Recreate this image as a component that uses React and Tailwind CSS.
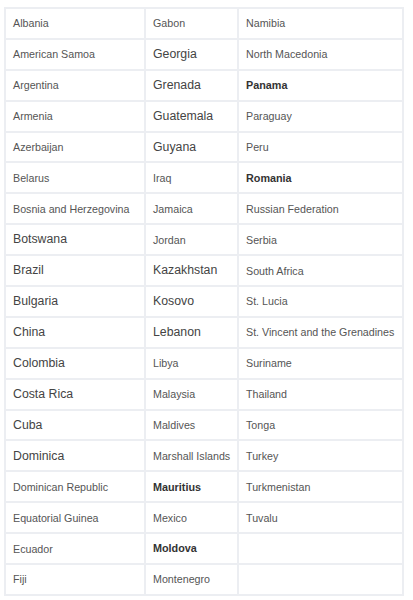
const rows = [
  [['Albania'], ['Gabon'], ['Namibia']],
  [['American Samoa'], ['Georgia', 'lg'], ['North Macedonia']],
  [['Argentina'], ['Grenada', 'lg'], ['Panama', 'b']],
  [['Armenia'], ['Guatemala', 'lg'], ['Paraguay']],
  [['Azerbaijan'], ['Guyana', 'lg'], ['Peru']],
  [['Belarus'], ['Iraq'], ['Romania', 'b']],
  [['Bosnia and Herzegovina'], ['Jamaica'], ['Russian Federation']],
  [['Botswana', 'lg'], ['Jordan'], ['Serbia']],
  [['Brazil', 'lg'], ['Kazakhstan', 'lg'], ['South Africa']],
  [['Bulgaria', 'lg'], ['Kosovo', 'lg'], ['St. Lucia']],
  [['China', 'lg'], ['Lebanon', 'lg'], ['St. Vincent and the Grenadines']],
  [['Colombia', 'lg'], ['Libya'], ['Suriname']],
  [['Costa Rica', 'lg'], ['Malaysia'], ['Thailand']],
  [['Cuba', 'lg'], ['Maldives'], ['Tonga']],
  [['Dominica', 'lg'], ['Marshall Islands'], ['Turkey']],
  [['Dominican Republic'], ['Mauritius', 'b'], ['Turkmenistan']],
  [['Equatorial Guinea'], ['Mexico'], ['Tuvalu']],
  [['Ecuador'], ['Moldova', 'b'], ['']],
  [['Fiji'], ['Montenegro'], ['']],
];

const cellStyle = {
  lg: 'text-[12.3px] text-[#444]',
  b: 'text-[10.8px] font-bold text-[#333]',
};

export default function App() {
  return (
    <div className="bg-white min-h-[600px] pt-[7px] pl-[4px] font-['Liberation_Sans',Arial,sans-serif]">
      <table className="border-collapse table-fixed w-[398px]">
        <colgroup>
          <col className="w-[140px]" />
          <col className="w-[93px]" />
          <col className="w-[165px]" />
        </colgroup>
        <tbody>
          {rows.map((row, i) => (
            <tr key={i} className="h-[30.9px]">
              {row.map(([name, kind], j) => (
                <td
                  key={j}
                  className={`border-2 border-[#eceef2] px-[7px] py-0 align-middle whitespace-nowrap ${
                    cellStyle[kind] || 'text-[10.7px] text-[#555]'
                  }`}
                >
                  {name}
                </td>
              ))}
            </tr>
          ))}
        </tbody>
      </table>
    </div>
  );
}
